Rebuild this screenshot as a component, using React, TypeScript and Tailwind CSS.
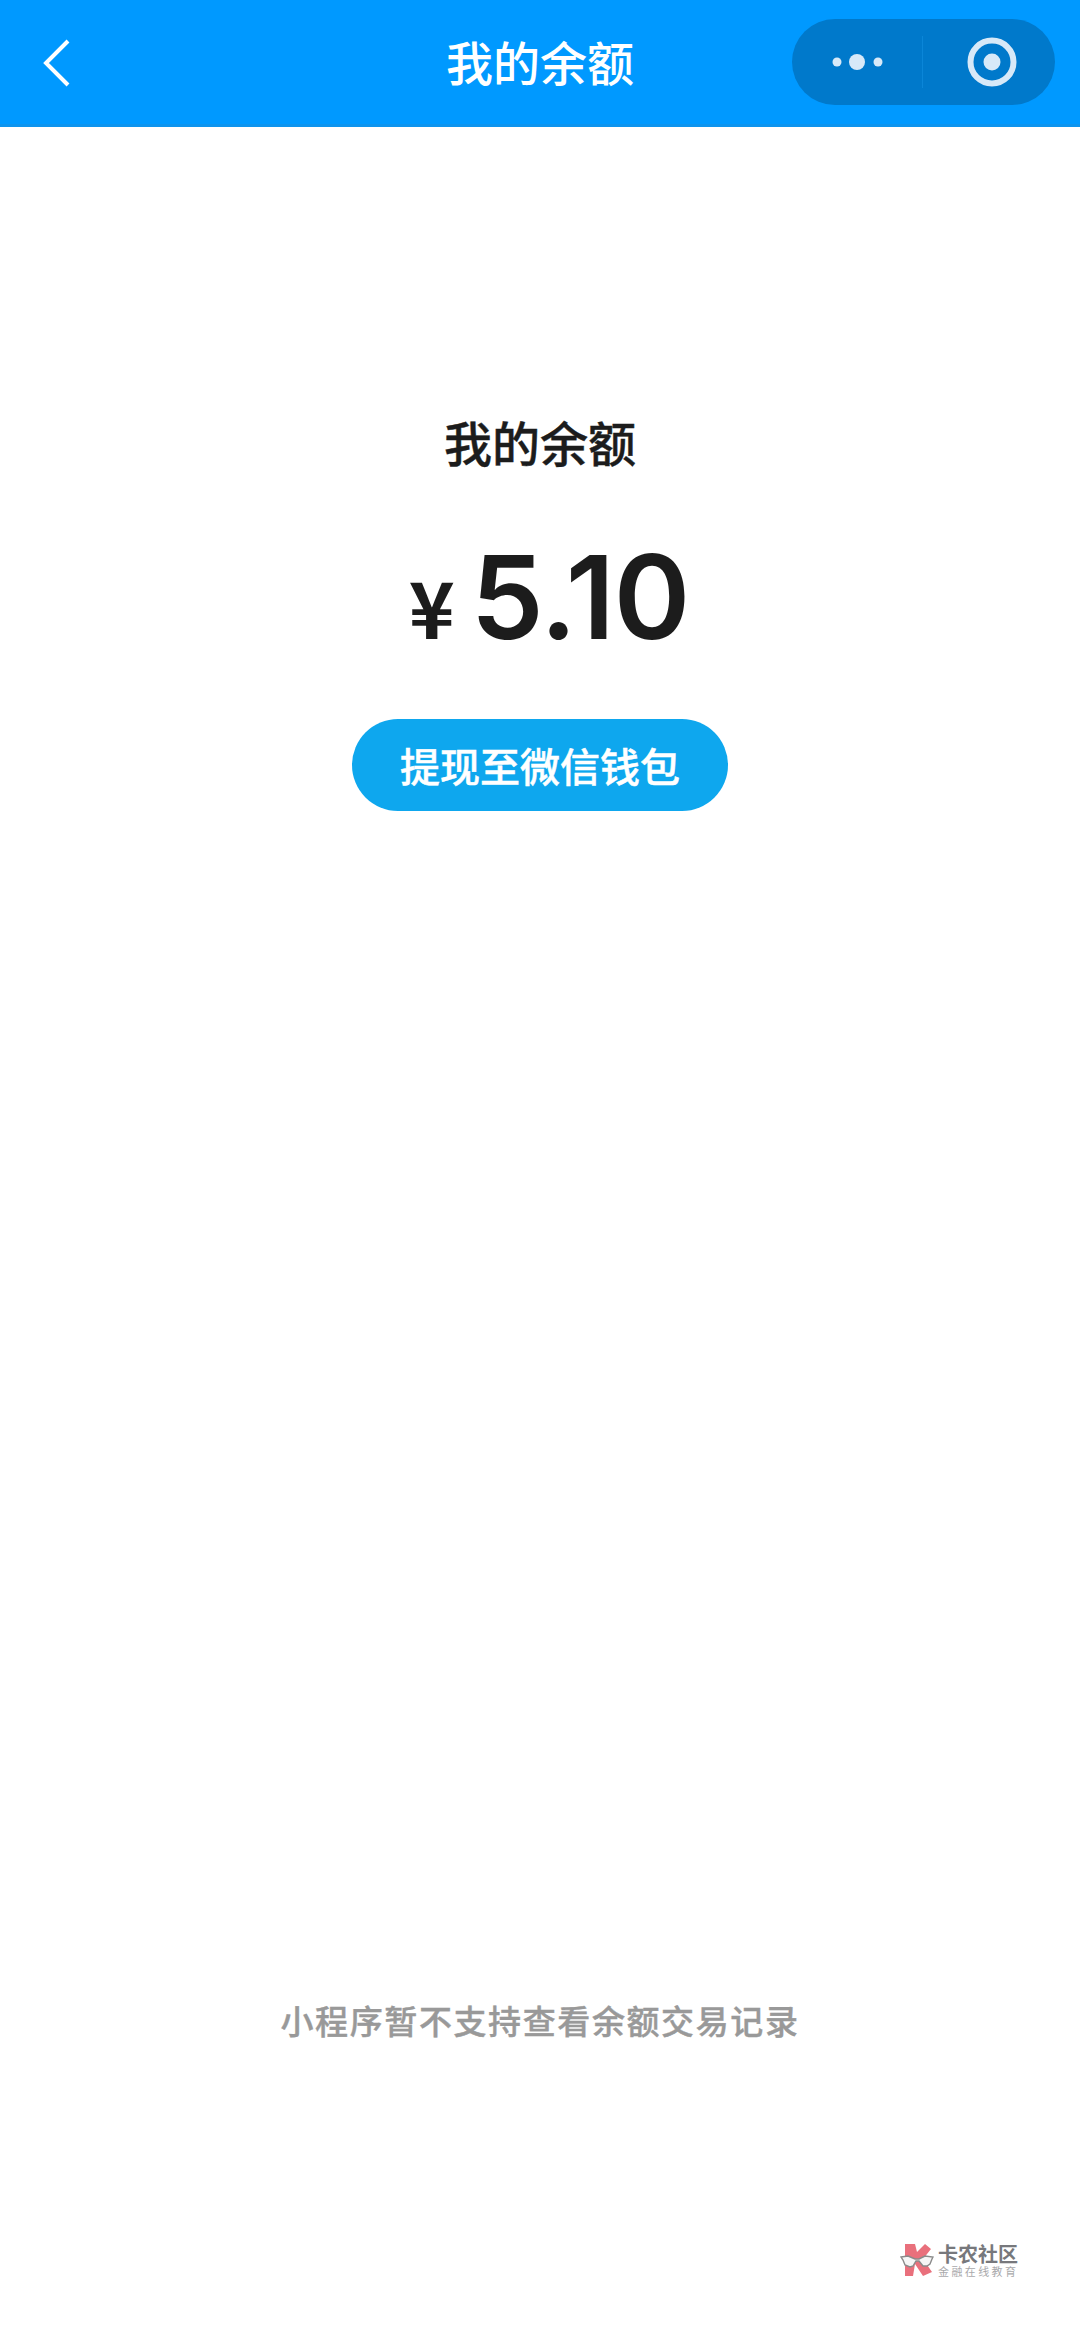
const cjk = "font-['Noto_Sans_CJK_SC','Noto_Sans',sans-serif]";

function Capsule() {
  return (
    <div className="mr-[25px] flex h-[86px] w-[263px] items-center rounded-[43px] bg-[#0079cb]">
      <svg width="130" height="86" viewBox="0 0 130 86" className="shrink-0">
        <circle cx="45" cy="43" r="4.5" fill="#d7e9f8" />
        <circle cx="65" cy="43" r="8" fill="#d7e9f8" />
        <circle cx="86" cy="43" r="4.5" fill="#d7e9f8" />
      </svg>
      <div className="h-[52px] w-px bg-[#0b86d8]" />
      <svg width="132" height="86" viewBox="0 0 132 86" className="shrink-0">
        <circle cx="69" cy="43" r="21.5" fill="none" stroke="#d7e9f8" strokeWidth="6" />
        <circle cx="69" cy="43" r="8.5" fill="#d7e9f8" />
      </svg>
    </div>
  );
}

function Logo() {
  return (
    <svg width="34" height="34" viewBox="0 0 34 34" className="shrink-0">
      <path d="M5 1h10l2 8 8-8 6 5-8 10 9 13-9 4-8-12-2 12H5z" fill="#e9707c" />
      <path d="M1 14l7-1 7 3h4l6-3 8 1-1 2-2 5-3 2h-4l-4-5h-3l-3 5-3 1-5-2-2-5z" fill="#f6f6f6" stroke="#8a8a8a" strokeWidth="1.4" />
    </svg>
  );
}

export default function App() {
  return (
    <div className={`relative flex min-h-[2329px] w-[1080px] flex-col bg-white ${cjk}`}>
      <header className="relative flex h-[127px] items-center justify-between border-b-[3px] border-[#0d94ee] bg-[#0099ff]">
        <svg width="30" height="50" viewBox="0 0 30 50" className="ml-[42px] mt-[1px]">
          <path d="M26 3 4 25l22 22" fill="none" stroke="#ffffff" strokeWidth="4" />
        </svg>
        <h1 className="absolute left-[446px] top-[30px] w-[188px] text-center text-[47px] leading-[62px] font-medium whitespace-nowrap text-white">
          我的余额
        </h1>
        <Capsule />
      </header>

      <main className="flex flex-1 flex-col items-center">
        <h2 className="mt-[284px] text-[48px] leading-[60px] font-medium text-[#1c1c1c] [-webkit-text-stroke:0.4px_#1c1c1c]">我的余额</h2>
        <div className="mt-[66px] flex h-[120px] items-baseline pl-[18px] font-['Inter',sans-serif] font-semibold text-[#1c1c1c]">
          <span className={`text-[78px] leading-[120px] font-bold ${cjk}`}>¥</span>
          <span className="ml-[16px] text-[116px] leading-[120px] tracking-[-1px]">5.10</span>
        </div>
        <button className="mt-[62px] flex h-[92px] w-[376px] items-center justify-center rounded-[46px] bg-[#0ea7ee] text-[40px] font-medium text-white [-webkit-text-stroke:0.5px_#ffffff]">
          提现至微信钱包
        </button>
        <p className="mt-[1184px] text-[33px] leading-[50px] font-medium tracking-[1.6px] text-[#999999] [-webkit-text-stroke:0.4px_#999999]">
          小程序暂不支持查看余额交易记录
        </p>
      </main>

      <div className="absolute left-[900px] top-[2243px] flex items-center gap-[4px]">
        <Logo />
        <div className="flex flex-col">
          <span className="text-[20px] leading-[22px] font-bold text-[#77787c]">卡农社区</span>
          <span className="text-[11px] leading-[12px] tracking-[2.4px] text-[#a9a9ab]">金融在线教育</span>
        </div>
      </div>
    </div>
  );
}
